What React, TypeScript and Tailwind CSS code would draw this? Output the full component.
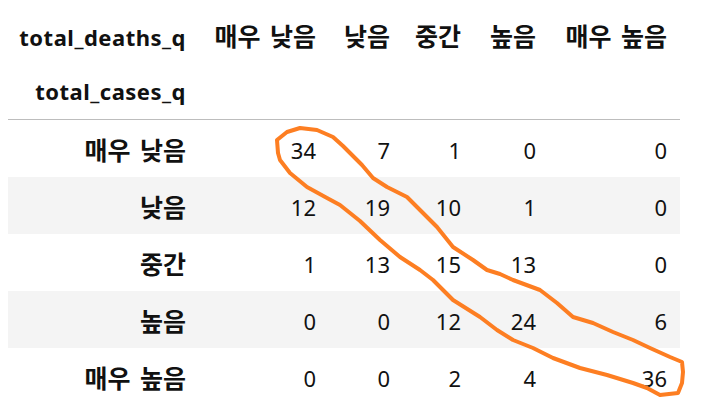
import React from 'react';

const cols = ['매우 낮음', '낮음', '중간', '높음', '매우 높음'];

const rows: { label: string; values: number[] }[] = [
  { label: '매우 낮음', values: [34, 7, 1, 0, 0] },
  { label: '낮음', values: [12, 19, 10, 1, 0] },
  { label: '중간', values: [1, 13, 15, 13, 0] },
  { label: '높음', values: [0, 0, 12, 24, 6] },
  { label: '매우 높음', values: [0, 0, 2, 4, 36] },
];

// hand-drawn marker loop around the diagonal
const loop = [
  [278, 153], [277, 140], [287, 132], [300, 128], [317, 130], [333, 137], [343, 146], [353, 156],
  [362, 165], [373, 178], [387, 187], [407, 197], [420, 210], [437, 227], [453, 247], [473, 260],
  [487, 270], [500, 274], [513, 280], [540, 290], [557, 303], [573, 317], [593, 323], [613, 332],
  [633, 340], [650, 348], [670, 357], [682, 362], [683, 372], [682, 383], [678, 393], [660, 395],
  [647, 388], [633, 383], [607, 375], [580, 368], [553, 358], [533, 348], [513, 340], [497, 330],
  [480, 317], [453, 300], [433, 280], [420, 270], [400, 257], [380, 240], [360, 221], [340, 205],
  [327, 198], [307, 187], [290, 173], [280, 160], [278, 153],
];

const grid = 'grid grid-cols-[191px_130px_74px_71px_75px_131px]';

function Ko({ text }: { text: string }) {
  return <span className="text-[25px] leading-[31px] [word-spacing:3px]">{text}</span>;
}

function App() {
  return (
    <div
      className="relative w-[705px] h-[417px] bg-white text-[#111] text-[22px] leading-[31px]"
      style={{ fontFamily: '"Noto Sans", "Noto Sans CJK KR", sans-serif' }}
    >
      <div className="pl-2 pt-2 w-[680px]">
        <div className={`${grid} h-[56px] pt-[2px] items-center font-bold`}>
          <div className="text-right pr-[13px] tracking-[0.5px]">total_deaths_q</div>
          {cols.map(c => (
            <div className="text-right pr-[13px]" key={c}><Ko text={c} /></div>
          ))}
        </div>
        <div className={`${grid} h-[56px] items-center font-bold border-b border-[#bdbdbd]`}>
          <div className="text-right pr-[13px] tracking-[0.5px]">total_cases_q</div>
        </div>
        {rows.map((r, i) => (
          <div className={`${grid} h-[57px] pt-[4px] items-center ${i % 2 === 1 ? 'bg-[#f4f4f4]' : ''}`} key={r.label}>
            <div className="text-right pr-[13px] font-bold"><Ko text={r.label} /></div>
            {r.values.map((v, j) => (
              <div className="text-right pr-[13px]" key={j}>{v}</div>
            ))}
          </div>
        ))}
      </div>
      <svg className="absolute left-0 top-0 pointer-events-none" width="705" height="417">
        <path
          d={'M ' + loop.map(p => p.join(',')).join(' L ')}
          fill="none"
          stroke="#fd7e22"
          strokeWidth="4"
          strokeLinejoin="round"
          strokeLinecap="round"
        />
      </svg>
    </div>
  );
}

export default App;
